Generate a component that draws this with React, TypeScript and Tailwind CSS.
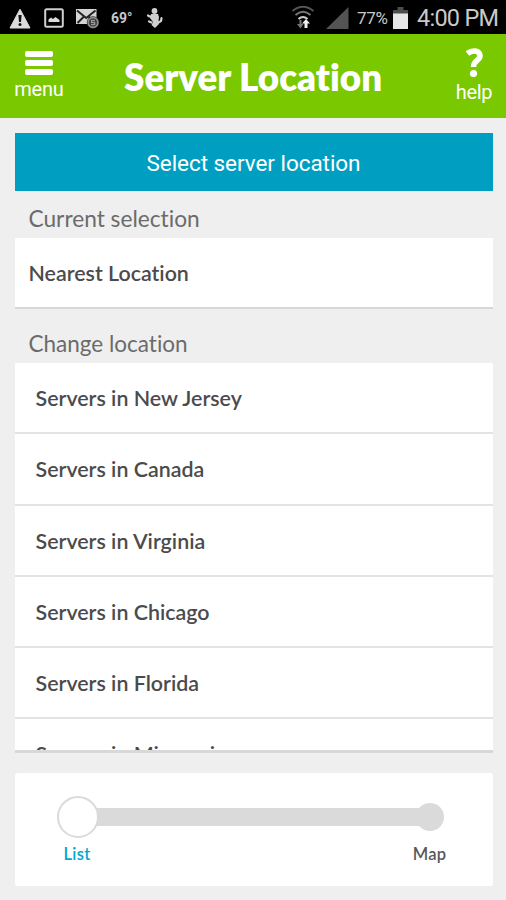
const SERVERS = [
  "Servers in New Jersey",
  "Servers in Canada",
  "Servers in Virginia",
  "Servers in Chicago",
  "Servers in Florida",
  "Servers in Missouri",
];

function WarningIcon() {
  return (
    <svg width="22" height="21" viewBox="0 0 22 21">
      <path d="M11 1.2 21 20H1Z" fill="#dcdcdc" stroke="#dcdcdc" strokeLinejoin="round" />
      <path d="M9.4 7h3.2l-.6 7h-2Z" fill="#111" />
      <circle cx="11" cy="16.6" r="1.5" fill="#111" />
    </svg>
  );
}

function PictureIcon() {
  return (
    <svg width="20" height="20" viewBox="0 0 20 20">
      <rect x="1.2" y="1.2" width="17.6" height="17.6" rx="1.5" fill="none" stroke="#cfcfcf" strokeWidth="2" />
      <path d="M4.5 14v-2.5l2.5-2 2 1.5 2.5-2 4 3V14Z" fill="#dcdcdc" />
    </svg>
  );
}

function MailIcon() {
  return (
    <svg width="24" height="21" viewBox="0 0 24 21">
      <rect x="0" y="1" width="20.5" height="15" fill="#d4d4d4" />
      <path d="m1 2.5 9.2 7.5 9.3-7.5M1.5 15l6.5-6.5M19 14l-6.5-5.5" fill="none" stroke="#222" strokeWidth="2" />
      <circle cx="17" cy="14.5" r="6.2" fill="#222" />
      <circle cx="17" cy="14.5" r="4.8" fill="#333" stroke="#8f8f8f" strokeWidth="1.8" />
      <path d="M19 12.3h-3.5v2.2h3.2v2.2h-3.7" fill="none" stroke="#999" strokeWidth="1.3" />
    </svg>
  );
}

function FigureIcon() {
  return (
    <svg width="18" height="22" viewBox="0 0 18 22">
      <circle cx="8.5" cy="4" r="2.9" fill="#cfcfcf" />
      <path d="M5 7h7l1 3-.5 4 .5 3-4 4-3.5-3 1.5-3L4 11Z" fill="#cfcfcf" />
      <path d="M5.5 9.5 3.5 9.5 2 8.5M5.5 15.5 3 14.5M11.5 16l3.5-2 .5-2.8" fill="none" stroke="#cfcfcf" strokeWidth="2.2" strokeLinecap="round" strokeLinejoin="round" />
    </svg>
  );
}

function WifiIcon() {
  return (
    <svg width="24" height="24" viewBox="0 0 24 24">
      <g fill="none" stroke="#555" strokeWidth="2.1">
        <path d="M1.5 5Q12-3.5 22.5 5" />
        <path d="M4.5 9Q12 2.5 19.5 9" stroke="#777" />
        <path d="M7.5 13Q12 9 16.5 13" stroke="#ccc" />
      </g>
      <path d="M9.5 14v5" stroke="#777" strokeWidth="2" />
      <path d="m6 18 3.5 4.5 3-4.5Z" fill="#777" />
      <path d="m15 13 4 4.5h-2.5V22h-3v-4.5H11Z" fill="#ededed" />
    </svg>
  );
}

function StatusBar() {
  return (
    <div className="flex h-[34px] items-center bg-black pl-[9px] pr-2 pt-0.5 text-[#c9c9c9]">
      <WarningIcon />
      <div className="ml-[13px]"><PictureIcon /></div>
      <div className="ml-3"><MailIcon /></div>
      <span className="ml-[11px] w-[24px] whitespace-nowrap text-[14px] font-bold leading-none">69°</span>
      <div className="ml-[11px]"><FigureIcon /></div>
      <div className="ml-auto"><WifiIcon /></div>
      <svg className="ml-[11px]" width="23" height="22" viewBox="0 0 23 22">
        <path d="M22.5 0v22H0Z" fill="#535353" />
      </svg>
      <span className="ml-2 w-[31px] whitespace-nowrap pt-px text-[17px] tracking-[-0.3px]">77%</span>
      <svg className="ml-[5px]" width="15" height="22" viewBox="0 0 15 22">
        <path d="M4.5 0h6v3H15v4H0V3h4.5Z" fill="#4c4c4c" />
        <path d="M0 6.5h15V22H0Z" fill="#e6e6e6" />
      </svg>
      <span className="ml-[9px] w-[81px] whitespace-nowrap pt-0.5 text-[23.5px] leading-none tracking-[-0.75px]">4:00 PM</span>
    </div>
  );
}

function Header() {
  return (
    <header className="flex h-[84px] bg-[#7ac900] px-[13px] text-white">
      <div className="flex w-[52px] flex-col items-center pt-[17px]">
        <div className="flex flex-col gap-[3px]">
          <span className="h-[6px] w-[28px] rounded-[2px] bg-white" />
          <span className="h-[6px] w-[28px] rounded-[2px] bg-white" />
          <span className="h-[6px] w-[28px] rounded-[2px] bg-white" />
        </div>
        <span className="mt-0.5 text-[20px] leading-[24px] tracking-[-0.2px]">menu</span>
      </div>
      <h1 className="flex-1 whitespace-nowrap pl-[59px] pt-[21px] font-['Lato'] text-[36.8px] font-extrabold leading-[44px]">
        Server Location
      </h1>
      <div className="flex w-[38px] flex-col items-center pt-[14px]">
        <svg width="17" height="30" viewBox="0 0 17 30">
          <path d="M1.5 5.5Q4.500 3 8 3c6.500 0 7.500 6 3.500 9-3 2.300-4 3.500-4 7" fill="none" stroke="#fff" strokeWidth="5.6" />
          <circle cx="7.5" cy="25.5" r="3.6" fill="#fff" />
        </svg>
        <span className="mt-[2px] text-[20px] leading-[24px] tracking-[-0.3px]">help</span>
      </div>
    </header>
  );
}

function ViewSlider() {
  return (
    <div className="mt-5 h-[113px] rounded-[2px] bg-white px-[42px] pt-[23px]">
      <div className="flex h-[42px] items-center">
        <span className="z-10 size-[42px] shrink-0 rounded-full border-2 border-[#dadada] bg-white" />
        <span className="-ml-1 h-[18px] flex-1 bg-[#dadada]" />
        <span className="-ml-3 mr-[7px] size-[28px] shrink-0 rounded-full bg-[#dadada]" />
      </div>
      <div className="mt-[5px] flex justify-between font-['Lato'] text-[16.5px] font-semibold leading-[22px] text-[#58585a]">
        <span className="w-[41px] text-center tracking-[0.3px] text-[#00a7cf]">List</span>
        <span className="mr-[4px] tracking-[0.3px]">Map</span>
      </div>
    </div>
  );
}

export default function App() {
  return (
    <div className="h-[900px] w-[506px] overflow-hidden bg-[#efefef] font-['Roboto',sans-serif] [font-variant-ligatures:none]">
      <StatusBar />
      <Header />
      <main className="pl-[14.5px] pr-[13.5px] pt-[15px] font-['Lato',sans-serif]">
        <button className="block h-[58px] w-full bg-[#009fc2] pt-[3px] font-['Roboto'] text-[22.5px] tracking-[-0.05px] text-white">
          Select server location
        </button>
        <h2 className="flex h-[47px] items-center pl-[14px] pt-[9px] text-[22.7px] text-[#6b6b6b]">Current selection</h2>
        <div className="flex h-[71px] items-center border-b-2 border-[#d6d6d6] bg-white pl-[14px] pt-0.5 text-[21.4px] font-semibold text-[#4b4b4d]">
          Nearest Location
        </div>
        <h2 className="flex h-[54px] items-center pl-[14px] pt-4 text-[22.5px] text-[#6b6b6b]">Change location</h2>
        <ul className="h-[390px] overflow-hidden border-b-[3px] border-[#d8d8d8] bg-white">
          {SERVERS.map((name) => (
            <li
              key={name}
              className="flex h-[71.25px] items-center border-b-2 border-[#e3e3e3] pl-[21px] pt-px text-[21.4px] font-semibold text-[#4b4b4d]"
            >
              {name}
            </li>
          ))}
        </ul>
        <ViewSlider />
      </main>
    </div>
  );
}
